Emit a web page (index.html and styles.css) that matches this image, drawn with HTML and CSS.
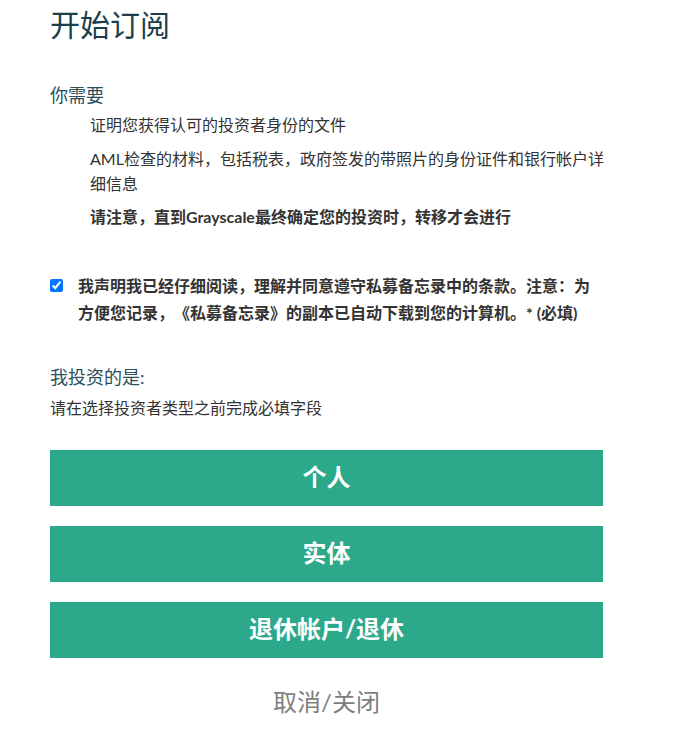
FILE: index.html
```html
<!DOCTYPE html>
<html lang="zh-CN">
<head>
    <meta charset="UTF-8">
    <meta name="viewport" content="width=device-width, initial-scale=1.0">
    <title>开始订阅</title>
    <link rel="stylesheet" href="styles.css">
</head>
<body>
    <div class="main">
        <h1 class="title">开始订阅</h1>
        <h2 class="need-title">你需要</h2>
        <ul class="need-list">
            <li>证明您获得认可的投资者身份的文件</li>
            <li>AML检查的材料，包括税表，政府签发的带照片的身份证件和银行帐户详细信息</li>
            <li class="note">请注意，直到Grayscale最终确定您的投资时，转移才会进行</li>
        </ul>
        <label class="agree">
            <input type="checkbox" checked>
            <span>我声明我已经仔细阅读，理解并同意遵守私募备忘录中的条款。注意：为方便您记录，《私募备忘录》的副本已自动下载到您的计算机。* (必填)</span>
        </label>
        <h3 class="invest-title">我投资的是:</h3>
        <p class="hint">请在选择投资者类型之前完成必填字段</p>
        <div class="type-btns">
            <button>个人</button>
            <button>实体</button>
            <button>退休帐户/退休</button>
        </div>
        <div class="cancel">取消/关闭</div>
    </div>
</body>
</html>
```

FILE: styles.css
```css
body {
    margin: 0;
    font-family: Lato, "Noto Sans CJK SC", sans-serif;
    color: #333;
    background: #fff;
    text-spacing-trim: space-all;
}
.main {
    width: 553px;
    padding-left: 50px;
}
.title {
    margin: 6px 0 0;
    font-size: 30px;
    line-height: 36px;
    font-weight: normal;
    color: #1b3f4b;
}
.need-title {
    margin: 41px 0 0;
    font-size: 18px;
    line-height: 24px;
    font-weight: normal;
    color: #2b4f5c;
}
.need-list {
    list-style: none;
    margin: 5px -8px 0 0;
    padding: 0 0 0 40px;
}
.need-list li {
    font-size: 16px;
    line-height: 25px;
    margin-bottom: 8.5px;
}
.need-list .note {
    font-weight: bold;
    margin-bottom: 0;
}
.agree {
    display: flex;
    align-items: flex-start;
    margin-top: 43px;
    font-size: 16px;
    line-height: 27px;
    font-weight: bold;
}
.agree input {
    width: 13px;
    height: 13px;
    margin: 7px 15px 0 0;
    flex-shrink: 0;
}
.invest-title {
    margin: 38.5px 0 0;
    font-size: 18px;
    line-height: 24px;
    font-weight: normal;
    color: #2b4f5c;
}
.hint {
    margin: 8px 0 0;
    font-size: 16px;
    line-height: 22px;
}
.type-btns {
    display: flex;
    flex-direction: column;
    gap: 20px;
    margin-top: 31px;
}
.type-btns button {
    height: 56px;
    padding: 0 0 4px;
    border: none;
    background: #2ca98b;
    color: #fff;
    font-family: inherit;
    font-size: 24px;
    font-weight: bold;
    cursor: pointer;
}
.cancel {
    margin-top: 29px;
    text-align: center;
    font-size: 24px;
    line-height: 30px;
    color: #808080;
}
```
